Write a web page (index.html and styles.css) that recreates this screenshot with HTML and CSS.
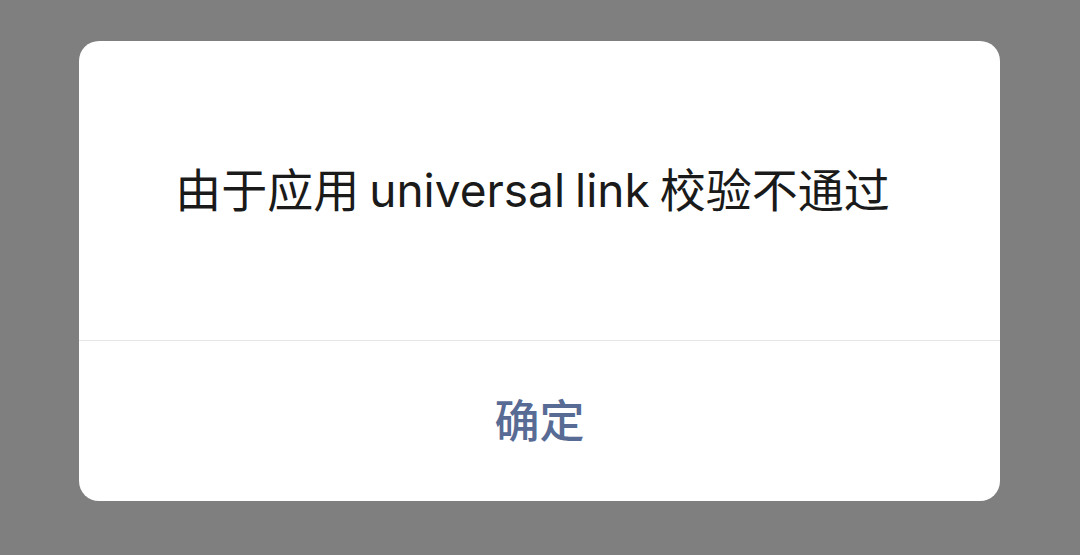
FILE: index.html
```html
<!DOCTYPE html>
<html lang="zh">
<head>
<meta charset="utf-8">
<link rel="stylesheet" href="styles.css">
</head>
<body>
<div class="dialog">
  <div class="dialog-body">由于应用 universal link 校验不通过</div>
  <div class="dialog-footer">
    <div class="btn">确定</div>
  </div>
</div>
</body>
</html>
```

FILE: styles.css
```css
html, body {
  margin: 0;
  padding: 0;
  height: 100%;
}
body {
  background: #7f7f7f;
  font-family: Inter, "Noto Sans CJK SC", sans-serif;
  padding-top: 41px;
  box-sizing: border-box;
}
.dialog {
  width: 921px;
  height: 460px;
  margin-left: 79px;
  background: #ffffff;
  border-radius: 20px;
  display: flex;
  flex-direction: column;
  overflow: hidden;
}
.dialog-body {
  height: 300px;
  display: flex;
  align-items: center;
  justify-content: center;
  font-size: 46px;
  color: #1a1a1a;
  border-bottom: 1px solid #e6e6e6;
  box-sizing: border-box;
  padding-bottom: 8px;
  padding-right: 14px;
  word-spacing: -3px;
}
.dialog-footer {
  flex: 1;
  display: flex;
  align-items: center;
  justify-content: center;
  padding-bottom: 6px;
}
.btn {
  font-size: 45px;
  font-weight: 500;
  color: #576b95;
}
```
